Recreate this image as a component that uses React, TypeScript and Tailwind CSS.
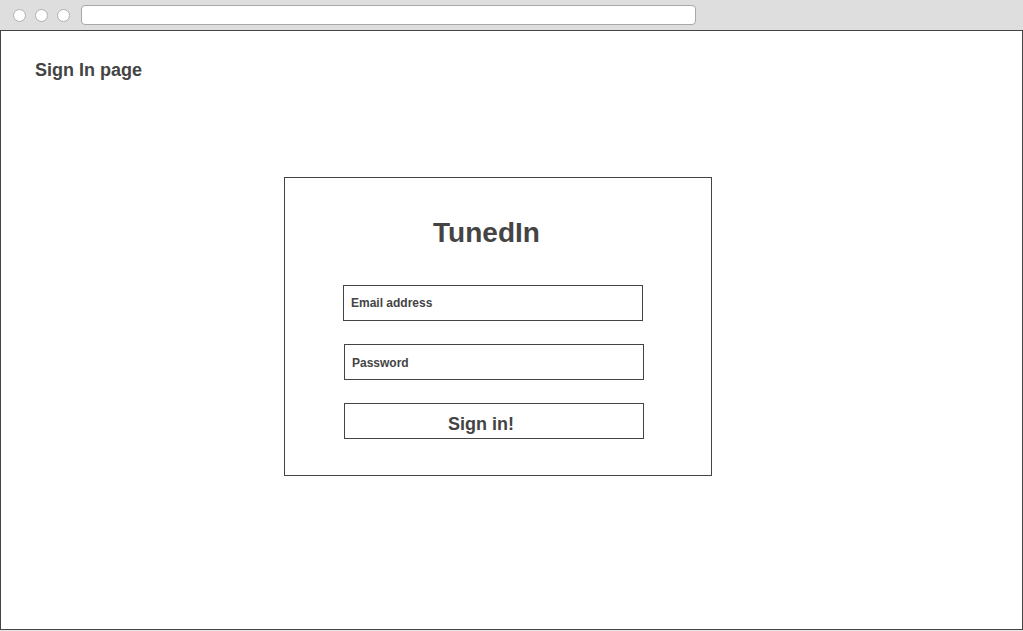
export default function App() {
  return (
    <div className="w-[1023px] h-[631px] flex flex-col bg-[#e6e6e6] text-[#444] font-['Liberation_Sans',Arial,sans-serif]">
      {/* browser chrome */}
      <div className="h-[30px] shrink-0 bg-[#dedede] flex items-start">
        <div className="flex gap-[9px] ml-[13px] mt-[9px]">
          <span className="w-[13px] h-[13px] rounded-full bg-white border border-[#b0b0b0]" />
          <span className="w-[13px] h-[13px] rounded-full bg-white border border-[#b0b0b0]" />
          <span className="w-[13px] h-[13px] rounded-full bg-white border border-[#b0b0b0]" />
        </div>
        <div className="ml-[11px] mt-[5px] w-[615px] h-[20px] rounded-[4px] bg-white border border-[#a8a8a8]" />
      </div>

      <main className="h-[600px] shrink-0 bg-white border border-[#444] flex flex-col">
        <h1 className="pl-[34px] pt-[28px] text-[18px] leading-[22px] font-bold">Sign In page</h1>

        <div className="ml-[283px] mt-[96px] w-[428px] h-[299px] border border-[#444] flex flex-col">
          <h2 className="pt-[39px] pr-[23px] text-center text-[28px] leading-[32px] font-bold">TunedIn</h2>

          <div className="mt-[36px] ml-[58px] w-[300px] h-[36px] border border-[#444] flex items-center pl-[7px] text-[12px] font-bold">
            Email address
          </div>
          <div className="mt-[23px] ml-[59px] w-[300px] h-[36px] border border-[#444] flex items-center pl-[7px] pt-[2px] text-[12px] font-bold">
            Password
          </div>
          <button className="mt-[23px] ml-[59px] w-[300px] h-[36px] border border-[#444] flex items-center justify-center pr-[26px] pt-[6px] text-[18px] font-bold">
            Sign in!
          </button>
        </div>
      </main>
    </div>
  );
}
